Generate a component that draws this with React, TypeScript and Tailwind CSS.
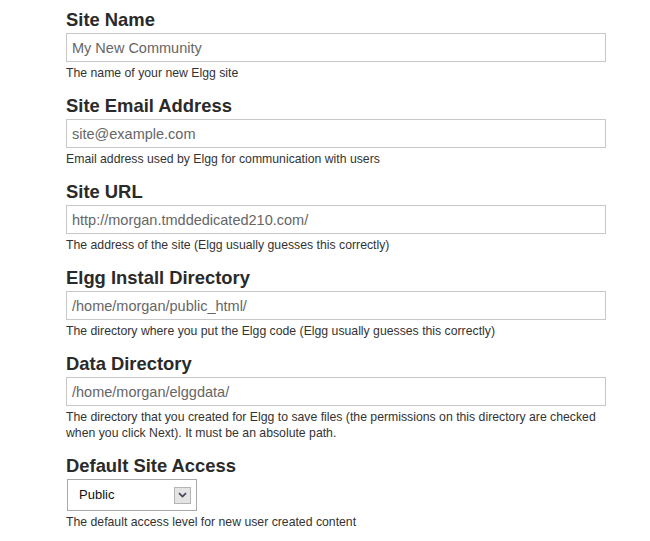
import { ReactNode } from "react";

const FIELDS = [
  { label: "Site Name", value: "My New Community", help: "The name of your new Elgg site" },
  { label: "Site Email Address", value: "site@example.com", help: "Email address used by Elgg for communication with users" },
  { label: "Site URL", value: "http://morgan.tmddedicated210.com/", help: "The address of the site (Elgg usually guesses this correctly)" },
  { label: "Elgg Install Directory", value: "/home/morgan/public_html/", help: "The directory where you put the Elgg code (Elgg usually guesses this correctly)" },
  {
    label: "Data Directory",
    value: "/home/morgan/elggdata/",
    help: "The directory that you created for Elgg to save files (the permissions on this directory are checked when you click Next). It must be an absolute path.",
  },
];

function Field({ label, help, children }: { label: string; help: string; children: ReactNode }) {
  return (
    <div className="mb-[14px]">
      <label className="mb-[2px] block text-[18.4px] font-bold leading-[22px] text-[#2a2a2a]">{label}</label>
      {children}
      <div className="mt-[3px] text-[12.25px] leading-[16px] text-[#333]">{help}</div>
    </div>
  );
}

function SelectArrow() {
  return (
    <span className="flex h-[17px] w-[17px] items-center justify-center border border-[#b5b5b5] bg-[#e4e4e4]">
      <svg width="9" height="6" viewBox="0 0 9 6">
        <path d="M1 1.2 L4.5 4.6 L8 1.2" fill="none" stroke="#4a4560" strokeWidth="1.8" />
      </svg>
    </span>
  );
}

export default function App() {
  return (
    <div className="min-h-[541px] w-[650px] bg-white pl-[66px] pt-[9px] font-['Liberation_Sans',Arial,sans-serif]">
      <div className="w-[540px]">
        {FIELDS.map((f) => (
          <Field key={f.label} label={f.label} help={f.help}>
            <input
              type="text"
              defaultValue={f.value}
              className="block h-[29px] w-full border border-[#c8c8c8] bg-white px-[5px] text-[14.5px] text-[#666] outline-none"
            />
          </Field>
        ))}
        <Field label="Default Site Access" help="The default access level for new user created content">
          <div className="ml-px flex h-[32px] w-[130px] items-center justify-between border border-[#aaa] bg-white pl-[11px] pr-[5px] text-[13px] text-[#111]">
            <span>Public</span>
            <SelectArrow />
          </div>
        </Field>
      </div>
    </div>
  );
}
